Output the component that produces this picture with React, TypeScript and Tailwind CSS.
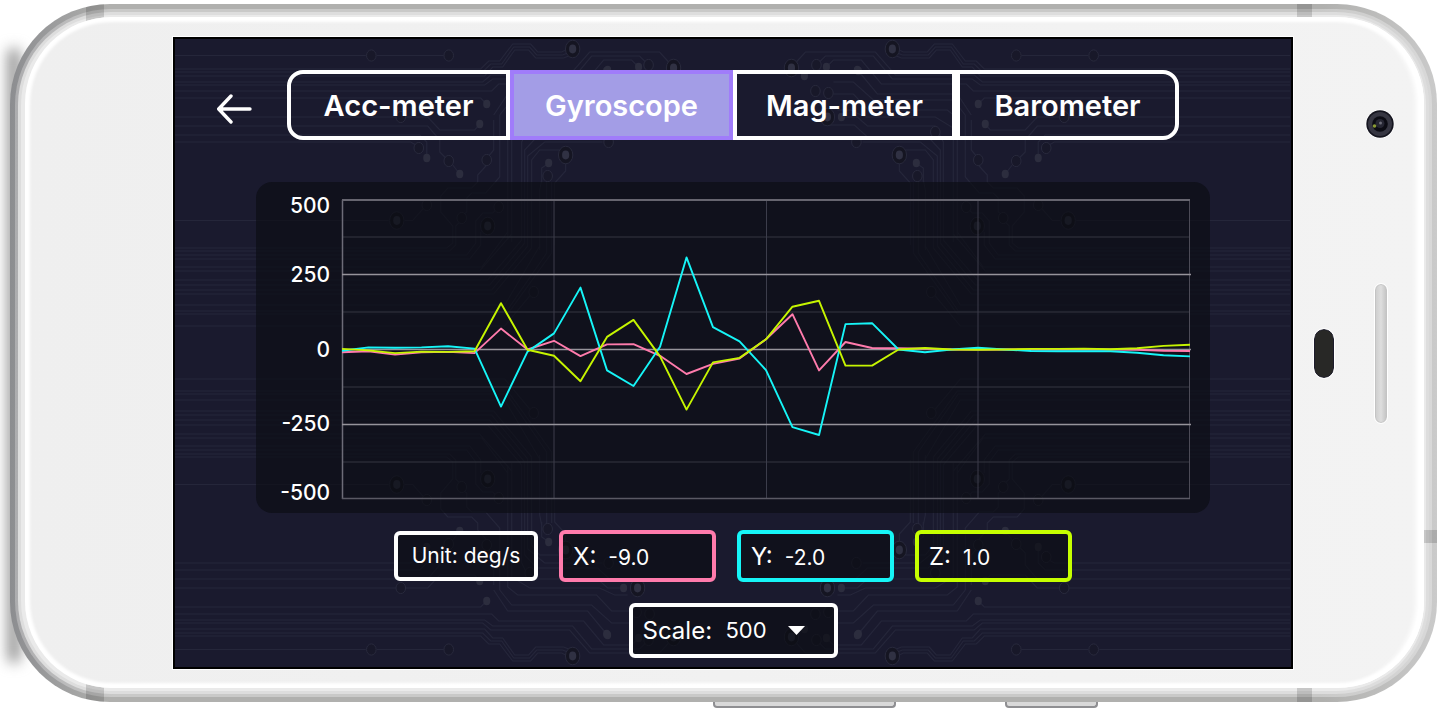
// ============================================================
// Sensor viewer — landscape phone showing the gyroscope screen
// ============================================================

import React, { useState } from 'react';

const tabs = ['Acc-meter', 'Gyroscope', 'Mag-meter', 'Barometer'];

const scales = ['250', '500', '1000', '2000'];

// Samples in deg/s, oldest first
const series = [
  {
    axis: 'X',
    color: '#ff7bac',
    samples: [
      -9, -6, -17, -9, -8, -12, 70, 0, 29, -22, 17, 18, -21, -82, -48, -30, 34, 118, -70, 25, 5, 4, 3, 0, 0, 0, 0, 0, 0,
      0, -1, -4, -5,
    ],
  },
  {
    axis: 'Y',
    color: '#16f5f7',
    samples: [
      -4, 7, 6, 7, 11, 3, -191, -7, 54, 207, -70, -122, 9, 308, 75, 27, -69, -260, -286, 85, 88, 0, -9, 0, 6, 0, -5, -6,
      -6, -6, -11, -19, -23,
    ],
  },
  {
    axis: 'Z',
    color: '#c6f500',
    samples: [
      2, -3, -12, -7, -8, -6, 155, -1, -21, -106, 42, 99, -23, -201, -43, -28, 34, 143, 163, -54, -54, 0, 5, 0, -1, 0, 2,
      2, 3, 1, 4, 12, 16,
    ],
  },
];

const readings = [
  { axis: 'X', value: '-9.0', border: 'border-[#ff7bac]' },
  { axis: 'Y', value: '-2.0', border: 'border-[#16f5f7]' },
  { axis: 'Z', value: '1.0', border: 'border-[#c6ff00]' },
];

const CHART_W = 846;
const CHART_H = 299;

const toPoints = (samples: number[], range: number) =>
  samples
    .map((v, i) => {
      const x = (i * CHART_W) / (samples.length - 1);
      const y = CHART_H / 2 - (v / range) * (CHART_H / 2);
      return `${x.toFixed(1)},${y.toFixed(1)}`;
    })
    .join(' ');

// ---------- Circuit board backdrop ----------

const traces = [
  // left edge, top
  'M175 55.5H366M377 55.5H444',
  'M175 69H481L489 61H500L513 44H531L538 52H562L566 50',
  'M175 72H483L491 64H502L514 47H530L537 55H563L568 53',
  'M175 76H485L493 67H503L515 50H529L536 58H564L569 56',
  'M175 82H483L491 75H570L590 52H660L670 63',
  'M175 85H485L493 79H573L592 56H640L646 62',
  'M175 91H492L499 84H584L604 60H632L637 65',
  'M175 98H481L487 104',
  'M175 117H428L440 130H475L480 124',
  'M175 126H428L440 140V152L446 158M453 165L460 174',
  'M175 135H420L427 142V158',
  'M175 142H411L416 145',
  // rising bundle towards the middle
  'M494 120V150L489 156M487 165L478 175V182L472 188H448L441 196V212L453 226V243L447 248H175',
  'M500 115V177L486 193H472L467 198V212L463 215M460 222L456 226V245L450 251H175',
  'M494 115L508 94H588L607 71',
  'M500 115L512 100H592L612 82H632',
  'M508 240V118L518 110H597L612 94H632',
  'M512 242V128L530 117H600L615 110H628',
  'M522 240V142L530 126H598L608 117H624',
  'M525 243V150L537 137H598L611 125H642',
  'M528 246V156L545 142H603',
  'M532 248V160L540 150H560M540 250V190L542 180M547 253V180M552 253V182',
  'M555 245V183L566 171V163M542 183V168L548 164',
  // lower fan out
  'M508 232L482 267H175M512 234L480 271H175M522 240L488 280H175M525 243L490 285H175',
  'M528 246L492 290H175M532 248L494 294H175M540 248V244M540 246L505 305H175',
  'M547 253L507 311H175M552 253L508 314H175M530 296L505 326H175',
  'M175 255H467L476 243V221L483 213H493L496 210',
  'M175 259H470L481 245V232',
  'M175 220.5H389M405 220.5H413L423 209',
];

const pads = [
  [371.5, 55.5], [449, 55.5], [401, 117], [419, 148], [449, 161], [487, 160], [427, 205], [462, 218], [499, 207],
  [534, 292], [548, 176], [649, 65], [650, 91], [637, 93], [609, 142], [530, 132],
];

const dots = [
  [487, 104], [480, 124], [427, 158], [460, 174], [549, 163], [639, 67], [608, 70], [661, 76], [624, 117], [607, 71],
];

const rings = [
  [573, 49], [566, 155], [397, 220.5], [488, 226], [674, 68], [638, 117],
];

const CircuitBackdrop: React.FC = () => (
  <svg
    className="pointer-events-none absolute inset-0 h-full w-full"
    viewBox="175 39 1117 628"
    preserveAspectRatio="none"
    aria-hidden="true"
  >
    <defs>
      <g id="circuit-quarter">
        {traces.map((d) => (
          <path key={d} d={d} fill="none" stroke="#25263a" strokeWidth="1.2" />
        ))}
        {pads.map(([cx, cy]) => (
          <ellipse key={`p${cx}-${cy}`} cx={cx} cy={cy} rx="4.8" ry="5.6" fill="#181829" stroke="#28293c" />
        ))}
        {dots.map(([cx, cy]) => (
          <ellipse key={`d${cx}-${cy}`} cx={cx} cy={cy} rx="3.6" ry="4.2" fill="#2c2d3e" />
        ))}
        {rings.map(([cx, cy]) => (
          <g key={`r${cx}-${cy}`}>
            <ellipse cx={cx} cy={cy} rx="7.2" ry="8.8" fill="#151522" stroke="#28293c" />
            <ellipse cx={cx} cy={cy} rx="3.6" ry="4.4" fill="#303143" />
          </g>
        ))}
      </g>
    </defs>
    <use href="#circuit-quarter" />
    <use href="#circuit-quarter" transform="translate(1466 0) scale(-1 1)" />
    <use href="#circuit-quarter" transform="translate(0 705) scale(1 -1)" />
    <use href="#circuit-quarter" transform="translate(1466 705) scale(-1 -1)" />
  </svg>
);

// ---------- Chart ----------

const SensorChart: React.FC<{ range: number }> = ({ range }) => {
  const labels = [range, range / 2, 0, -range / 2, -range];

  return (
    <section
      aria-label="Gyroscope readings"
      className="relative mx-[81px] mt-[42px] flex rounded-2xl bg-[#0a0d12]/65 pt-[18px] pr-5 pb-[14px]"
    >
      <div className="mr-3 flex w-[74px] flex-col text-right text-[21px] leading-3 font-medium">
        {labels.map((label, i) => (
          <div
            key={label}
            className={
              i === 0
                ? 'flex flex-1 items-start justify-end'
                : i === labels.length - 1
                  ? 'flex flex-1 items-end justify-end'
                  : 'flex flex-[2] items-center justify-end'
            }
          >
            {label}
          </div>
        ))}
      </div>
      <svg
        className="h-[299px] min-w-0 flex-1 overflow-visible"
        viewBox={`0 0 ${CHART_W} ${CHART_H}`}
        preserveAspectRatio="none"
        role="img"
        aria-label="X, Y and Z rotation over time"
      >
        {[37, 112, 187, 262].map((y) => (
          <path key={y} d={`M0 ${y}H${CHART_W}`} stroke="#343641" />
        ))}
        {[211.5, 423.5, 634.5].map((x) => (
          <path key={x} d={`M${x} 0V${CHART_H}`} stroke="#3c3d4b" />
        ))}
        <path d={`M0.5 0V${CHART_H}`} stroke="#6d6c78" strokeWidth="1.5" />
        <path d={`M845.5 0V${CHART_H}`} stroke="#4c4b57" />
        <path d={`M0 0H${CHART_W}`} stroke="#66656f" strokeWidth="1.8" />
        <path d={`M0 298.5H${CHART_W}`} stroke="#5a5964" strokeWidth="1.4" />
        {[74.5, 149.5, 224.5].map((y) => (
          <path key={y} d={`M0 ${y}H${CHART_W + 1}`} stroke="#96949b" strokeWidth="1.5" />
        ))}
        {series.map((s) => (
          <polyline
            key={s.axis}
            points={toPoints(s.samples, range)}
            fill="none"
            stroke={s.color}
            strokeWidth="1.9"
            strokeLinejoin="round"
          />
        ))}
      </svg>
    </section>
  );
};

// ---------- Screen ----------

const GyroscopeScreen: React.FC = () => {
  const [active, setActive] = useState('Gyroscope');
  const [scale, setScale] = useState('500');

  return (
    <main className="relative flex min-w-0 flex-1 flex-col overflow-hidden border-2 border-black bg-[#1a1a2e] pt-[31px] pb-[9px] text-white outline outline-white">
      <CircuitBackdrop />

      <header className="relative flex items-stretch">
        <button type="button" aria-label="Back" className="flex w-28 items-center justify-center pt-2 pl-2">
          <svg width="36" height="30" viewBox="0 0 36 30" fill="none" stroke="currentColor" strokeWidth="3.4" strokeLinecap="round" strokeLinejoin="round">
            <path d="M33 15H2M14 2L1.7 15L14 28" />
          </svg>
        </button>
        <nav className="grid flex-1 grid-cols-4 text-[29px] font-semibold">
          {tabs.map((tab) => (
            <button
              key={tab}
              type="button"
              aria-pressed={tab === active}
              onClick={() => setActive(tab)}
              className={`h-[70px] border-4 pt-[2px] first:rounded-l-2xl last:rounded-r-2xl ${
                tab === active ? 'border-[#a07cfa] bg-[#a39de6]' : 'border-white'
              }`}
            >
              {tab}
            </button>
          ))}
        </nav>
        <div className="w-28" />
      </header>

      <SensorChart range={Number(scale)} />

      <div className="relative mt-[17px] flex items-center justify-center gap-[21px]">
        <div className="flex h-[50px] w-36 items-center justify-center rounded-md border-4 border-white bg-[#0a0d12]/65 text-[21px]">
          Unit: deg/s
        </div>
        {readings.map((r) => (
          <div
            key={r.axis}
            className={`flex h-[52px] w-[157px] items-baseline gap-3 rounded-md border-4 bg-[#0a0d12]/65 pt-[5px] pl-[10px] ${r.border}`}
          >
            <label htmlFor={`value-${r.axis}`} className="text-2xl leading-9">
              {r.axis}:
            </label>
            <output id={`value-${r.axis}`} className="text-[21px]">
              {r.value}
            </output>
          </div>
        ))}
      </div>

      <div className="relative mt-[21px] flex justify-center">
        <div className="relative flex h-[55px] w-[209px] items-center rounded-md border-4 border-white bg-[#0a0d12]/65 pl-[10px]">
          <label htmlFor="scale" className="w-[83px] text-2xl">
            Scale:
          </label>
          <select
            id="scale"
            value={scale}
            onChange={(e) => setScale(e.target.value)}
            className="h-full flex-1 appearance-none bg-transparent text-[22px] outline-none"
          >
            {scales.map((s) => (
              <option key={s} className="bg-[#10111d]">
                {s}
              </option>
            ))}
          </select>
          <svg className="pointer-events-none absolute right-[29px]" width="17" height="9" viewBox="0 0 17 9" fill="currentColor" aria-hidden="true">
            <path d="M0 0H17L8.5 9Z" />
          </svg>
        </div>
      </div>
    </main>
  );
};

// ---------- Phone body ----------

const App: React.FC = () => {
  return (
    <div className="relative flex min-h-screen flex-col overflow-hidden bg-white pt-1 pr-2 pl-[10px] font-[Inter,'Liberation_Sans',sans-serif]">
      {/* Shadow cast past the left edge */}
      <div className="absolute top-12 bottom-12 left-2 w-3 rounded-full bg-[#8a8a8a] blur-[7px]" />

      <div className="relative flex overflow-hidden rounded-[100px] bg-[linear-gradient(90deg,#8c8d90_0%,#b0b0ae_7%,#b0b0ae_92%,#cacaca_100%)] pt-[13px] pr-[13px] pb-[14px] pl-[15px]">
        <div className="absolute inset-[5px] rounded-[96px] bg-[linear-gradient(90deg,#adadaf_0%,#c9c9c8_7%,#c9c9c8_92%,#d8d8d8_100%)]" />
        <div className="absolute inset-2 rounded-[93px] bg-[#dddddd]" />
        <div className="absolute inset-[11px] rounded-[90px] bg-[#eaeaea]" />

        {/* Antenna bands */}
        <div className="absolute inset-y-0 left-[76px] w-[18px] bg-black/15" />
        <div className="absolute inset-y-0 right-[125px] w-[15px] bg-black/15" />
        <div className="absolute right-0 bottom-[159px] h-[13px] w-16 bg-black/15" />

        <div className="relative flex flex-1 rounded-[87px] bg-[linear-gradient(90deg,#efefef_0%,#f3f3f3_100%)] pt-5 pb-[19px] shadow-[inset_0_0_3px_5px_#fff,inset_-8px_0_5px_0_#fff]">
          <div className="w-[148px]" />
          <GyroscopeScreen />
          <div className="relative flex w-[131px] items-center gap-[41px] pl-[21px]">
            <div className="h-[49px] w-5 rounded-full border border-[#1d1c2c] bg-[#282826] outline outline-white" />
            <div className="h-[139px] w-3 rounded-full border border-[#c4c4c4] bg-[linear-gradient(90deg,#cfcfcf,#dedede_50%,#c6c6c6)] outline outline-white" />
            <svg className="absolute top-[72px] right-[29px]" width="30" height="30" viewBox="0 0 30 30" aria-hidden="true">
              <circle cx="15" cy="15" r="14.5" fill="#fff" />
              <circle cx="15" cy="15" r="13.7" fill="#15151f" />
              <circle cx="15" cy="15" r="12" fill="#363642" />
              <circle cx="15" cy="15" r="7.8" fill="#0c0c14" />
              <circle cx="15" cy="14.5" r="4.5" fill="#262633" />
              <circle cx="15.5" cy="14" r="1.5" fill="#6b6b78" />
              <circle cx="9.5" cy="17" r="1.8" fill="#8a9a35" />
            </svg>
          </div>
        </div>
      </div>

      {/* Side keys */}
      <div className="flex justify-end gap-[109px] pr-[339px]">
        <div className="h-[6px] w-[183px] rounded-b-sm border-x-2 border-b-2 border-[#8f8f92] bg-[#d9d9d9]" />
        <div className="h-[6px] w-[93px] rounded-b-sm border-x-2 border-b-2 border-[#8f8f92] bg-[#d9d9d9]" />
      </div>
    </div>
  );
};

export default App;
